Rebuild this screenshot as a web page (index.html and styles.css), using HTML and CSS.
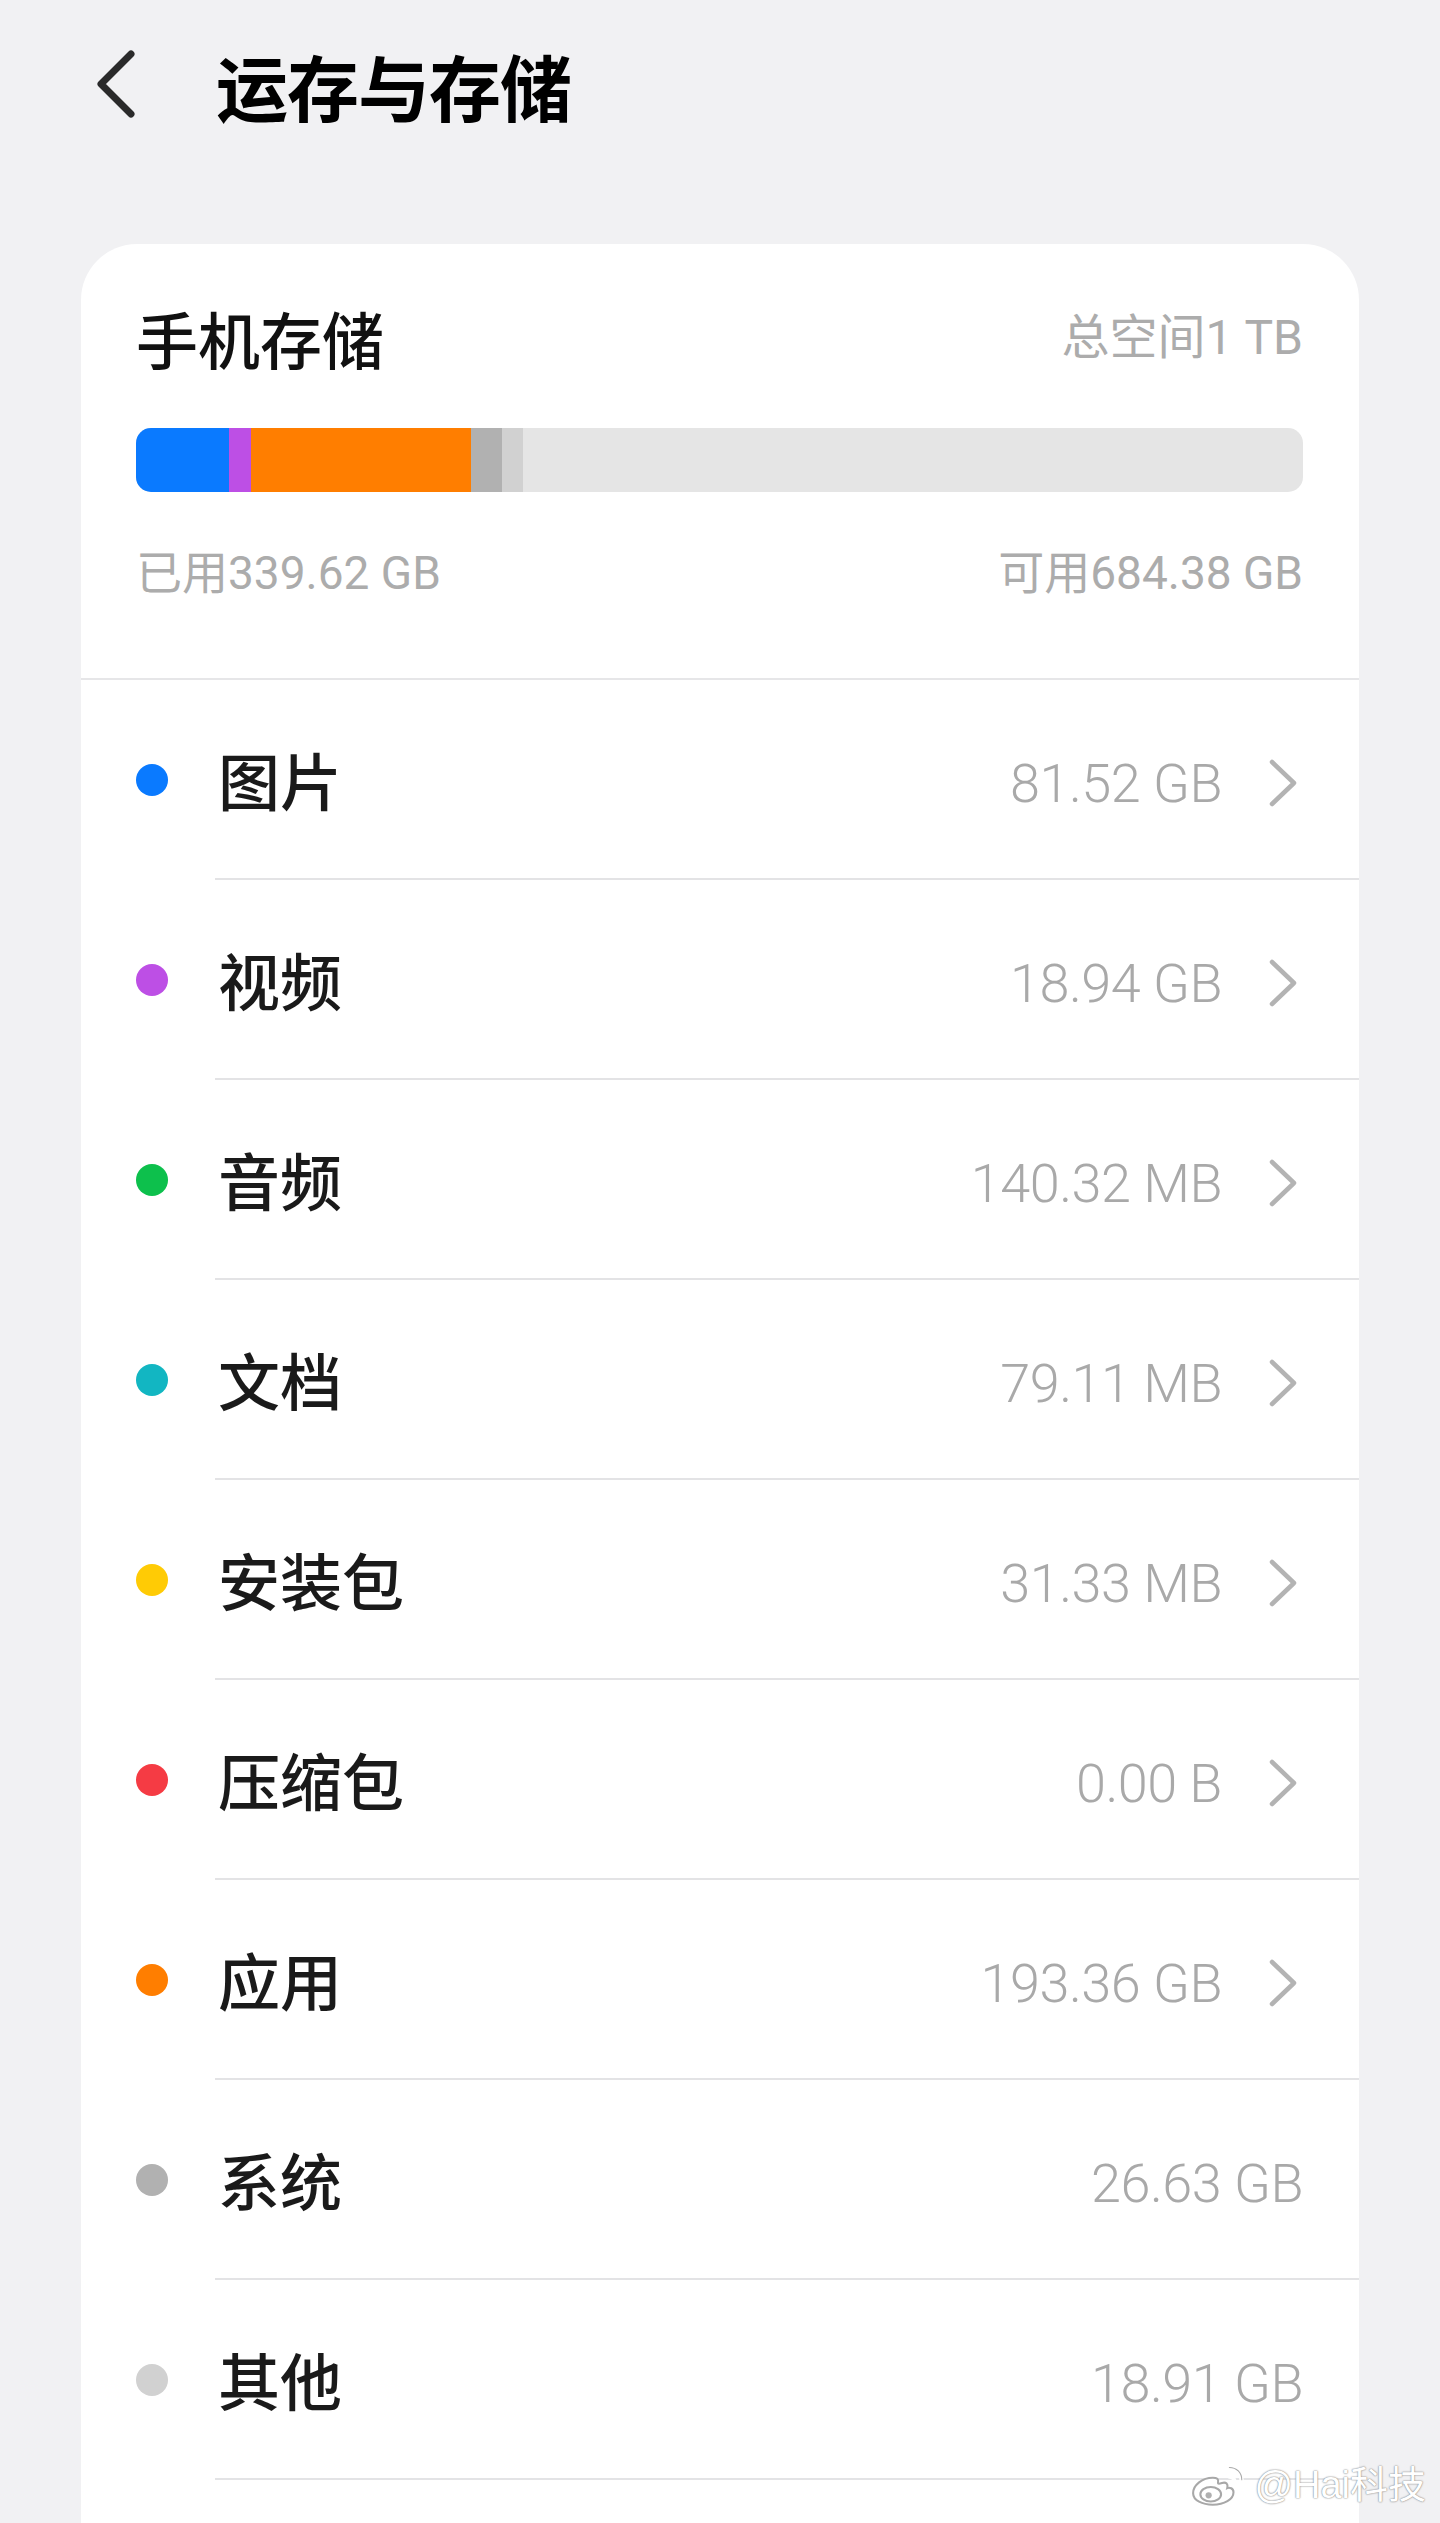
FILE: index.html
```html
<!DOCTYPE html>
<html lang="zh-CN">
<head>
<meta charset="utf-8">
<title>运存与存储</title>
<link rel="stylesheet" href="styles.css">
</head>
<body>
<div class="screen">
  <header class="topbar">
    <svg class="back" viewBox="0 0 48 80" width="48" height="80" aria-hidden="true">
      <path d="M39 9 L9 39 L39 69" fill="none" stroke="#2a2a2a" stroke-width="7" stroke-linecap="round" stroke-linejoin="round"/>
    </svg>
    <h1 class="title">运存与存储</h1>
  </header>

  <section class="card">
    <div class="summary">
      <div class="summary-head">
        <h2 class="summary-title">手机存储</h2>
        <span class="muted total">总空间1 TB</span>
      </div>
      <div class="bar">
        <span class="seg c-blue" style="width:93px"></span>
        <span class="seg c-purple" style="width:22px"></span>
        <span class="seg c-orange" style="width:220px"></span>
        <span class="seg c-gray" style="width:31px"></span>
        <span class="seg c-lightgray" style="width:21px"></span>
      </div>
      <div class="summary-foot">
        <span class="muted">已用339.62 GB</span>
        <span class="muted">可用684.38 GB</span>
      </div>
    </div>

    <ul class="list">
      <li class="item">
        <span class="dot-col"><span class="dot c-blue"></span></span>
        <div class="item-body">
          <span class="label">图片</span>
          <span class="value">81.52 GB</span>
          <svg class="chev" viewBox="0 0 36 50" width="36" height="50" aria-hidden="true"><path d="M6 4 L28 25 L6 46" fill="none" stroke="#b3b3b3" stroke-width="4.5" stroke-linecap="round" stroke-linejoin="round"/></svg>
        </div>
      </li>
      <li class="item">
        <span class="dot-col"><span class="dot c-purple"></span></span>
        <div class="item-body">
          <span class="label">视频</span>
          <span class="value">18.94 GB</span>
          <svg class="chev" viewBox="0 0 36 50" width="36" height="50" aria-hidden="true"><path d="M6 4 L28 25 L6 46" fill="none" stroke="#b3b3b3" stroke-width="4.5" stroke-linecap="round" stroke-linejoin="round"/></svg>
        </div>
      </li>
      <li class="item">
        <span class="dot-col"><span class="dot c-green"></span></span>
        <div class="item-body">
          <span class="label">音频</span>
          <span class="value">140.32 MB</span>
          <svg class="chev" viewBox="0 0 36 50" width="36" height="50" aria-hidden="true"><path d="M6 4 L28 25 L6 46" fill="none" stroke="#b3b3b3" stroke-width="4.5" stroke-linecap="round" stroke-linejoin="round"/></svg>
        </div>
      </li>
      <li class="item">
        <span class="dot-col"><span class="dot c-teal"></span></span>
        <div class="item-body">
          <span class="label">文档</span>
          <span class="value">79.11 MB</span>
          <svg class="chev" viewBox="0 0 36 50" width="36" height="50" aria-hidden="true"><path d="M6 4 L28 25 L6 46" fill="none" stroke="#b3b3b3" stroke-width="4.5" stroke-linecap="round" stroke-linejoin="round"/></svg>
        </div>
      </li>
      <li class="item">
        <span class="dot-col"><span class="dot c-yellow"></span></span>
        <div class="item-body">
          <span class="label">安装包</span>
          <span class="value">31.33 MB</span>
          <svg class="chev" viewBox="0 0 36 50" width="36" height="50" aria-hidden="true"><path d="M6 4 L28 25 L6 46" fill="none" stroke="#b3b3b3" stroke-width="4.5" stroke-linecap="round" stroke-linejoin="round"/></svg>
        </div>
      </li>
      <li class="item">
        <span class="dot-col"><span class="dot c-red"></span></span>
        <div class="item-body">
          <span class="label">压缩包</span>
          <span class="value">0.00 B</span>
          <svg class="chev" viewBox="0 0 36 50" width="36" height="50" aria-hidden="true"><path d="M6 4 L28 25 L6 46" fill="none" stroke="#b3b3b3" stroke-width="4.5" stroke-linecap="round" stroke-linejoin="round"/></svg>
        </div>
      </li>
      <li class="item">
        <span class="dot-col"><span class="dot c-orange"></span></span>
        <div class="item-body">
          <span class="label">应用</span>
          <span class="value">193.36 GB</span>
          <svg class="chev" viewBox="0 0 36 50" width="36" height="50" aria-hidden="true"><path d="M6 4 L28 25 L6 46" fill="none" stroke="#b3b3b3" stroke-width="4.5" stroke-linecap="round" stroke-linejoin="round"/></svg>
        </div>
      </li>
      <li class="item">
        <span class="dot-col"><span class="dot c-gray"></span></span>
        <div class="item-body">
          <span class="label">系统</span>
          <span class="value">26.63 GB</span>
        </div>
      </li>
      <li class="item">
        <span class="dot-col"><span class="dot c-lightgray"></span></span>
        <div class="item-body">
          <span class="label">其他</span>
          <span class="value">18.91 GB</span>
        </div>
      </li>
    </ul>
  </section>

  <div class="watermark">
    <svg class="weibo" viewBox="0 0 56 42" width="58" height="44" aria-hidden="true">
      <path d="M22 14 C12 14 3 21 3 29 C3 36 12 40 22 40 C33 40 42 35 42 28 C42 24 38 23 36 24 C37 20 35 18 31 19 C28 20 27 20 27 19 C28 15 26 14 22 14 Z" fill="#ffffff" stroke="#a8a8a8" stroke-width="2"/>
      <ellipse cx="20" cy="30" rx="10" ry="7" fill="#ffffff" stroke="#a8a8a8" stroke-width="2"/>
      <circle cx="18" cy="31" r="3" fill="#b0b0b0"/>
      <path d="M38 6 C45 6 50 11 50 18" fill="none" stroke="#ffffff" stroke-width="4" stroke-linecap="round"/>
      <path d="M38 6 C45 6 50 11 50 18" fill="none" stroke="#a8a8a8" stroke-width="1" stroke-linecap="round" transform="translate(0 -2)"/>
      <path d="M38 13 C41 13 43 15 43 18" fill="none" stroke="#ffffff" stroke-width="4" stroke-linecap="round"/>
    </svg>
    <span class="wm-text">@Hai科技</span>
  </div>
</div>
</body>
</html>
```

FILE: styles.css
```css
* {
  box-sizing: border-box;
}

html, body {
  margin: 0;
  padding: 0;
}

body {
  background: #f1f1f3;
  font-family: "Noto Sans CJK SC", "Noto Sans", sans-serif;
  color: #1a1a1a;
}

.screen {
  position: relative;
  width: 1440px;
  height: 2523px;
  overflow: hidden;
}

.topbar {
  height: 170px;
  display: flex;
  align-items: center;
  padding-left: 92px;
  margin-bottom: 74px;
}

.back {
  display: block;
  flex: none;
}

.title {
  margin: 0 0 0 76px;
  font-size: 72px;
  font-weight: 700;
  letter-spacing: -1px;
  color: #000;
  line-height: 1;
}

.card {
  margin-left: 81px;
  width: 1278px;
  background: #fff;
  border-radius: 56px 56px 0 0;
  padding-bottom: 80px;
}

.summary {
  height: 436px;
  padding: 0 56px 0 55px;
  border-bottom: 2px solid #e6e6e8;
  display: flex;
  flex-direction: column;
}

.summary-head {
  display: flex;
  justify-content: space-between;
  align-items: center;
  height: 96px;
  margin-top: 46px;
}

.summary-title {
  margin: 0;
  font-size: 62px;
  font-weight: 500;
  line-height: 1;
  color: #111;
}

.muted {
  font-family: "Roboto", "Noto Sans CJK SC", sans-serif;
  color: #acacac;
  font-size: 46px;
  font-weight: 400;
  line-height: 1;
}

.total {
  font-size: 48px;
}

.bar {
  margin-top: 42px;
  height: 64px;
  border-radius: 15px;
  background: #e5e5e5;
  overflow: hidden;
  display: flex;
}

.seg {
  display: block;
  height: 100%;
}

.summary-foot {
  display: flex;
  justify-content: space-between;
  align-items: center;
  margin-top: 60px;
  height: 42px;
}

.list {
  list-style: none;
  margin: 0;
  padding: 0;
}

.item {
  display: flex;
  height: 200px;
}

.dot-col {
  flex: none;
  width: 134px;
  padding-left: 55px;
  display: flex;
  align-items: center;
}

.dot {
  display: block;
  width: 32px;
  height: 32px;
  border-radius: 50%;
}

.item-body {
  flex: 1;
  display: flex;
  align-items: center;
  border-bottom: 2px solid #e3e3e5;
  padding-right: 56px;
  padding-left: 3px;
}

.label {
  flex: 1;
  font-size: 62px;
  font-weight: 500;
  line-height: 1;
  color: #1a1a1a;
}

.value {
  font-family: "Roboto", sans-serif;
  font-size: 54px;
  font-weight: 300;
  color: #a9a9a9;
  line-height: 1;
  letter-spacing: -0.5px;
  margin-top: 9px;
}

.chev {
  display: block;
  flex: none;
  margin-left: 44px;
  margin-right: 1px;
  margin-top: 7px;
}

.c-blue { background: #0a7aff; }
.c-purple { background: #bd4fe5; }
.c-orange { background: #ff7e00; }
.c-gray { background: #b1b1b1; }
.c-lightgray { background: #d1d1d1; }
.c-green { background: #0dc04c; }
.c-teal { background: #12b6c2; }
.c-yellow { background: #ffcb05; }
.c-red { background: #f53b44; }

.watermark {
  position: absolute;
  right: 14px;
  bottom: 16px;
  display: flex;
  align-items: center;
  gap: 6px;
}

.weibo {
  display: block;
}

.wm-text {
  font-family: "Liberation Sans", "Noto Sans CJK SC", sans-serif;
  font-size: 38px;
  color: #ffffff;
  line-height: 1;
  text-shadow: 0 0 2px #8a8a8a, 0 0 1px #8a8a8a;
}
```
